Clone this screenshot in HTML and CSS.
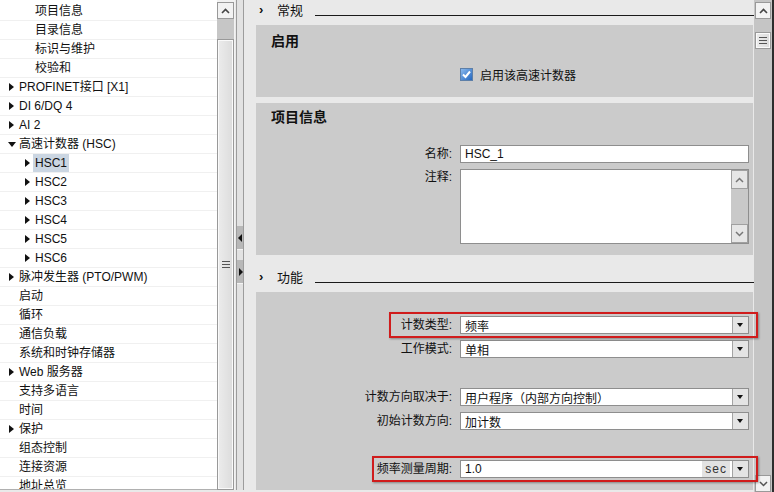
FILE: index.html
```html
<!DOCTYPE html>
<html lang="zh-CN">
<head>
    <meta charset="UTF-8">
    <title>HSC 属性</title>
    <link rel="stylesheet" href="styles.css">
</head>
<body>
<div class="app">
    <div class="nav">
        <div class="node lvl2"><span class="tw"></span><span class="txt">项目信息</span></div>
        <div class="node lvl2"><span class="tw"></span><span class="txt">目录信息</span></div>
        <div class="node lvl2"><span class="tw"></span><span class="txt">标识与维护</span></div>
        <div class="node lvl2"><span class="tw"></span><span class="txt">校验和</span></div>
        <div class="node"><span class="tw closed"></span><span class="txt">PROFINET接口 [X1]</span></div>
        <div class="node"><span class="tw closed"></span><span class="txt">DI 6/DQ 4</span></div>
        <div class="node"><span class="tw closed"></span><span class="txt">AI 2</span></div>
        <div class="node"><span class="tw open"></span><span class="txt">高速计数器 (HSC)</span></div>
        <div class="node lvl2"><span class="tw closed"></span><span class="txt sel">HSC1</span></div>
        <div class="node lvl2"><span class="tw closed"></span><span class="txt">HSC2</span></div>
        <div class="node lvl2"><span class="tw closed"></span><span class="txt">HSC3</span></div>
        <div class="node lvl2"><span class="tw closed"></span><span class="txt">HSC4</span></div>
        <div class="node lvl2"><span class="tw closed"></span><span class="txt">HSC5</span></div>
        <div class="node lvl2"><span class="tw closed"></span><span class="txt">HSC6</span></div>
        <div class="node"><span class="tw closed"></span><span class="txt">脉冲发生器 (PTO/PWM)</span></div>
        <div class="node"><span class="tw"></span><span class="txt">启动</span></div>
        <div class="node"><span class="tw"></span><span class="txt">循环</span></div>
        <div class="node"><span class="tw"></span><span class="txt">通信负载</span></div>
        <div class="node"><span class="tw"></span><span class="txt">系统和时钟存储器</span></div>
        <div class="node"><span class="tw closed"></span><span class="txt">Web 服务器</span></div>
        <div class="node"><span class="tw"></span><span class="txt">支持多语言</span></div>
        <div class="node"><span class="tw"></span><span class="txt">时间</span></div>
        <div class="node"><span class="tw closed"></span><span class="txt">保护</span></div>
        <div class="node"><span class="tw"></span><span class="txt">组态控制</span></div>
        <div class="node"><span class="tw"></span><span class="txt">连接资源</span></div>
        <div class="node"><span class="tw"></span><span class="txt">地址总览</span></div>
    </div>

    <div class="nav-scroll">
        <div class="sb-btn">
            <svg width="9" height="6" viewBox="0 0 9 6"><path d="M1 5 L4.5 1.5 L8 5" fill="none" stroke="#444" stroke-width="1.6"/></svg>
        </div>
        <div class="sb-gap"></div>
        <div class="sb-thumb long">
            <svg width="8" height="7" viewBox="0 0 8 7"><path d="M0 0.5 H8 M0 3.5 H8 M0 6.5 H8" stroke="#555" stroke-width="1"/></svg>
        </div>
    </div>

    <div class="splitter">
        <div class="split-btn left"><span></span></div>
        <div class="split-btn right"><span></span></div>
    </div>

    <div class="content">
        <div class="sec-head">
            <span class="chev">›</span><span class="sec-title">常规</span><span class="sec-line"></span>
        </div>

        <div class="panel panel-enable">
            <div class="panel-title">启用</div>
            <div class="row">
                <span class="lbl"></span>
                <span class="field check">
                    <svg width="13" height="13" viewBox="0 0 13 13">
                        <defs>
                            <linearGradient id="cbfill" x1="0" y1="0" x2="1" y2="1">
                                <stop offset="0" stop-color="#8fbdf0"/>
                                <stop offset="1" stop-color="#1f63bd"/>
                            </linearGradient>
                        </defs>
                        <rect x="0.5" y="0.5" width="12" height="12" fill="url(#cbfill)" stroke="#5d7fa8"/>
                        <path d="M3 6.5 L5.5 9 L10 3.5" fill="none" stroke="#fff" stroke-width="2"/>
                    </svg>
                    <span>启用该高速计数器</span>
                </span>
            </div>
        </div>

        <div class="panel panel-info">
            <div class="panel-title">项目信息</div>
            <div class="row">
                <span class="lbl">名称:</span>
                <span class="field box"><span class="val">HSC_1</span></span>
            </div>
            <div class="row tall">
                <span class="lbl">注释:</span>
                <span class="field box memo">
                    <span class="memo-bar">
                        <span class="mini-btn"><svg width="9" height="6" viewBox="0 0 9 6"><path d="M1 5 L4.5 1.5 L8 5" fill="none" stroke="#777" stroke-width="1.5"/></svg></span>
                        <span class="mini-btn"><svg width="9" height="6" viewBox="0 0 9 6"><path d="M1 1 L4.5 4.5 L8 1" fill="none" stroke="#777" stroke-width="1.5"/></svg></span>
                    </span>
                </span>
            </div>
        </div>

        <div class="sec-head second">
            <span class="chev">›</span><span class="sec-title">功能</span><span class="sec-line"></span>
        </div>

        <div class="panel panel-func">
            <div class="row mark mark-type">
                <span class="lbl">计数类型:</span>
                <span class="field box"><span class="val">频率</span><span class="dd"></span></span>
            </div>
            <div class="row">
                <span class="lbl">工作模式:</span>
                <span class="field box"><span class="val">单相</span><span class="dd"></span></span>
            </div>
            <div class="row blank"></div>
            <div class="row">
                <span class="lbl">计数方向取决于:</span>
                <span class="field box"><span class="val">用户程序（内部方向控制）</span><span class="dd"></span></span>
            </div>
            <div class="row">
                <span class="lbl">初始计数方向:</span>
                <span class="field box"><span class="val">加计数</span><span class="dd"></span></span>
            </div>
            <div class="row blank"></div>
            <div class="row mark mark-period">
                <span class="lbl">频率测量周期:</span>
                <span class="field box"><span class="val">1.0</span><span class="unit">sec</span><span class="dd"></span></span>
            </div>
        </div>
    </div>

    <div class="main-scroll">
        <div class="sb-btn">
            <svg width="9" height="6" viewBox="0 0 9 6"><path d="M1 5 L4.5 1.5 L8 5" fill="none" stroke="#444" stroke-width="1.6"/></svg>
        </div>
        <div class="sb-thumb short">
            <svg width="8" height="7" viewBox="0 0 8 7"><path d="M0 0.5 H8 M0 3.5 H8 M0 6.5 H8" stroke="#555" stroke-width="1"/></svg>
        </div>
        <div class="sb-btn down">
            <svg width="9" height="6" viewBox="0 0 9 6"><path d="M1 1 L4.5 4.5 L8 1" fill="none" stroke="#555" stroke-width="1.5"/></svg>
        </div>
    </div>
    <div class="edge"></div>
</div>
</body>
</html>
```

FILE: styles.css
```css
body {
    margin: 0;
    font-family: "Liberation Sans", "Noto Sans CJK SC", sans-serif;
    font-size: 12px;
    color: #111;
    overflow: hidden;
}
.app {
    display: flex;
    width: 774px;
    height: 492px;
    background-color: #e9e9e9;
}

/* left tree */
.nav {
    width: 217px;
    height: 490px;
    padding-top: 2px;
    box-sizing: border-box;
    background-color: #fff;
    border-bottom: 1px solid #b0b0b0;
    overflow: hidden;
    flex-shrink: 0;
}
.node {
    display: flex;
    align-items: center;
    height: 19px;
    box-sizing: border-box;
    border-bottom: 1px solid #f0f0f0;
    white-space: nowrap;
}
.node .tw {
    width: 11px;
    margin-left: 8px;
    flex-shrink: 0;
    height: 8px;
    position: relative;
}
.node.lvl2 .tw {
    margin-left: 24px;
}
.tw.closed::before {
    content: "";
    position: absolute;
    left: 1px;
    top: 0;
    border-left: 5px solid #111;
    border-top: 4px solid transparent;
    border-bottom: 4px solid transparent;
}
.tw.open::before {
    content: "";
    position: absolute;
    left: 0;
    top: 2px;
    border-top: 5px solid #111;
    border-left: 4px solid transparent;
    border-right: 4px solid transparent;
}
.node .txt {
    line-height: 18px;
}
.node .txt.sel {
    background-color: #cbd6e2;
    padding: 0 2px;
    margin-left: -2px;
}

/* scrollbars */
.nav-scroll {
    width: 18px;
    height: 490px;
    padding-top: 2px;
    box-sizing: border-box;
    background-color: #f2f2f2;
    display: flex;
    flex-direction: column;
    flex-shrink: 0;
}
.sb-btn {
    width: 17px;
    height: 17px;
    box-sizing: border-box;
    border: 1px solid #999;
    background-color: #f2f2f2;
    display: flex;
    align-items: center;
    justify-content: center;
    flex-shrink: 0;
}
.sb-gap {
    height: 20px;
    background-color: #c6c6c6;
    width: 17px;
}
.sb-thumb {
    width: 17px;
    box-sizing: border-box;
    border: 1px solid #999;
    box-shadow: inset 0 0 0 1px #fafafa;
    background: linear-gradient(to right, #ececec, #dcdcdc);
    display: flex;
    align-items: center;
    justify-content: center;
}
.sb-thumb.long {
    flex: 1;
}
.sb-thumb.short {
    height: 17px;
    margin-top: 13px;
}

.splitter {
    width: 8px;
    margin: 0 1px;
    height: 490px;
    box-sizing: border-box;
    border-left: 1px solid #9c9c9c;
    border-right: 1px solid #9c9c9c;
    background-color: #e2e2e2;
    display: flex;
    flex-direction: column;
    padding-top: 226px;
    flex-shrink: 0;
}
.split-btn {
    height: 23px;
    background-color: #b8b8b8;
    border-bottom: 1px solid #f4f4f4;
    position: relative;
}
.split-btn.right {
    margin-top: 10px;
}
.split-btn span {
    position: absolute;
    top: 8px;
    left: 1px;
    border-top: 4px solid transparent;
    border-bottom: 4px solid transparent;
}
.split-btn.left span {
    border-right: 4px solid #111;
}
.split-btn.right span {
    border-left: 4px solid #111;
    left: 2px;
}

/* right property area */
.content {
    width: 509px;
    padding-left: 11px;
    box-sizing: border-box;
    display: flex;
    flex-direction: column;
    background-color: #e9e9e9;
    flex-shrink: 0;
}
.sec-head {
    display: flex;
    align-items: flex-start;
    height: 25px;
    flex-shrink: 0;
}
.sec-head.second {
    padding-top: 12px;
}
.chev {
    width: 21px;
    padding-left: 3px;
    box-sizing: border-box;
    font-weight: bold;
    font-size: 13px;
    line-height: 20px;
}
.sec-title {
    font-family: "Noto Sans CJK SC", sans-serif;
    font-size: 13px;
    line-height: 20px;
}
.sec-line {
    flex: 1;
    height: 15px;
    margin-left: 12px;
    border-bottom: 1px solid #1a1a1a;
}

.panel {
    background-color: #cbcbcb;
    margin-right: 1px;
    padding-right: 4px;
    display: flex;
    flex-direction: column;
    gap: 6px;
}
.panel-title {
    font-family: "Noto Sans CJK SC", sans-serif;
    font-weight: bold;
    font-size: 14px;
    line-height: 20px;
    padding-left: 15px;
}
.panel-enable {
    height: 72px;
    padding-top: 5px;
    box-sizing: border-box;
    gap: 15px;
}
.panel-info {
    height: 152px;
    margin-top: 6px;
    padding-top: 3px;
    box-sizing: border-box;
}
.panel-info .panel-title {
    margin-bottom: 13px;
}
.panel-func {
    flex: 1;
    padding-top: 24px;
    margin-bottom: 2px;
}

.row {
    display: flex;
    gap: 8px;
    height: 18px;
    position: relative;
}
.row.tall {
    height: 75px;
}
.lbl {
    width: 196px;
    flex-shrink: 0;
    text-align: right;
    line-height: 18px;
}
.row.tall .lbl {
    line-height: 16px;
}
.field {
    flex: 1;
    display: flex;
    align-items: center;
    box-sizing: border-box;
}
.field.check {
    gap: 7px;
}
.field.box {
    background-color: #fff;
    border: 1px solid #8e8e8e;
}
.val {
    padding-left: 4px;
    flex: 1;
    white-space: nowrap;
}
.unit {
    background-color: #e2e2e2;
    height: 100%;
    padding: 0 3px;
    letter-spacing: 1px;
    line-height: 16px;
    color: #333;
    margin-right: 2px;
}
.dd {
    width: 16px;
    height: 100%;
    box-sizing: border-box;
    border-left: 1px solid #a4a4a4;
    background-color: #e4e4e4;
    position: relative;
}
.dd::before {
    content: "";
    position: absolute;
    left: 4px;
    top: 6px;
    border-top: 4px solid #111;
    border-left: 3.5px solid transparent;
    border-right: 3.5px solid transparent;
}

.field.memo {
    justify-content: flex-end;
    align-items: stretch;
}
.memo-bar {
    width: 17px;
    background-color: #c9c9c9;
    display: flex;
    flex-direction: column;
    justify-content: space-between;
}
.mini-btn {
    height: 17px;
    border: 1px solid #a0a0a0;
    background-color: #e6e6e6;
    display: flex;
    align-items: center;
    justify-content: center;
}

/* red annotation frames */
.row.mark::after {
    content: "";
    position: absolute;
    top: -4px;
    bottom: -4px;
    right: -9px;
    border: 2px solid #d01c1c;
    box-shadow: 1px 1px 2px rgba(0, 0, 0, 0.35);
    z-index: 2;
}
.mark-type::after {
    left: 133px;
}
.mark-period::after {
    left: 116px;
}

.main-scroll {
    width: 18px;
    padding: 2px 1px 0 1px;
    box-sizing: border-box;
    background-color: #c5c5c5;
    display: flex;
    flex-direction: column;
    flex-shrink: 0;
}
.main-scroll .sb-btn,
.main-scroll .sb-thumb {
    width: 16px;
}
.main-scroll .sb-btn.down {
    margin-top: auto;
}
.edge {
    width: 2px;
    background-color: #2d2d2d;
}
```
